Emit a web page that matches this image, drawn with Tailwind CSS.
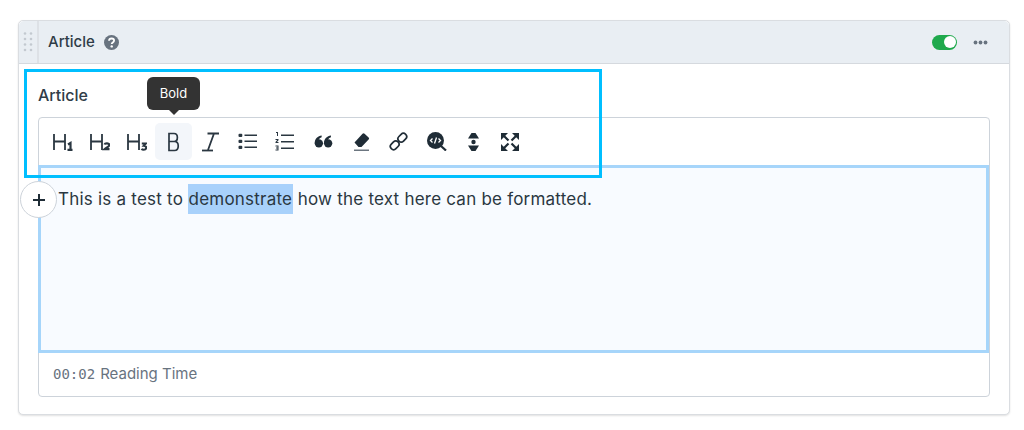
<!DOCTYPE html>
<html><head><meta charset="utf-8"><script src="https://cdn.jsdelivr.net/npm/@tailwindcss/browser@4"></script></head>
<body class="bg-white font-['Inter',sans-serif] w-[1024px] h-[430px] overflow-hidden relative">
<div class="pt-5 pl-[18px] w-[1010px]">
 <div class="w-[992px] h-[395px] rounded-[5px] border border-[#dadde1] shadow-[0_1px_2px_rgba(0,0,0,0.12)] bg-white">
  <div class="h-[43px] bg-[#e9eef3] border-b border-[#d5d9de] rounded-t-[5px] flex items-center">
   <div class="w-[20px] h-full border-r-2 border-[#dde1e6] flex items-center justify-center">
    <svg width="10" height="22" viewBox="0 0 10 22" fill="#c3c9d0"><circle cx="2" cy="2.5" r="1.3"/><circle cx="8" cy="2.5" r="1.3"/><circle cx="2" cy="8" r="1.3"/><circle cx="8" cy="8" r="1.3"/><circle cx="2" cy="13.5" r="1.3"/><circle cx="8" cy="13.5" r="1.3"/><circle cx="2" cy="19" r="1.3"/><circle cx="8" cy="19" r="1.3"/></svg>
   </div>
   <span class="ml-[9px] text-[15px] font-medium text-[#2f3c47]">Article</span>
   <svg class="ml-[9px]" width="15" height="15" viewBox="0 0 15 15"><circle cx="7.5" cy="7.5" r="7.5" fill="#68737f"/><path d="M5 5.800c.1-1.500 1.200-2.300 2.600-2.300 1.500 0 2.500.9 2.500 2.100 0 2-2.400 1.800-2.400 3.500" fill="none" stroke="#fff" stroke-width="1.800"/><circle cx="7.700" cy="11.400" r="1.200" fill="#fff"/></svg>
   <div class="ml-auto flex items-center mr-[21px] gap-[16px]">
    <div class="w-[25px] h-[15px] rounded-full bg-[#1fa94c] relative"><div class="absolute right-[1.5px] top-[1.5px] w-[12px] h-[12px] rounded-full bg-white"></div></div>
    <svg width="15" height="5" viewBox="0 0 15 5" fill="#68737f"><circle cx="2.5" cy="2.5" r="1.9"/><circle cx="7.5" cy="2.5" r="1.9"/><circle cx="12.5" cy="2.5" r="1.9"/></svg>
   </div>
  </div>
  <div class="pt-[21px] pl-[19px]">
   <div class="text-[16px] font-medium text-[#2f3c47] leading-[20px] h-[22px]">Article</div>
   <div class="mt-[10px] h-[280px] w-[952px] rounded-[4px] border border-[#cdd3da] flex flex-col">
    <div class="h-[47px] flex items-center pl-[5px] shrink-0 text-[#2a3741]">
     <button class="w-[37px] h-[37px] flex items-center justify-center"><svg width="20" height="18" viewBox="0 0 20 18" fill="none" stroke="#2a3741" stroke-width="1.8"><path d="M1 1v16M12 1v16M1 8.500h11"/><path d="M15 11.500l2.500-1.500v7M14.500 16.800h5" stroke-width="2.200"/></svg></button>
     <button class="w-[37px] h-[37px] flex items-center justify-center"><svg width="20" height="18" viewBox="0 0 20 18" fill="none" stroke="#2a3741" stroke-width="1.8"><path d="M1 1v16M12 1v16M1 8.500h11"/><path d="M14.500 11.500c.5-1.700 4.800-1.700 4.800.5 0 1.700-3.300 2.700-4.800 4.200h5" stroke-width="2.200"/></svg></button>
     <button class="w-[37px] h-[37px] flex items-center justify-center"><svg width="20" height="18" viewBox="0 0 20 18" fill="none" stroke="#2a3741" stroke-width="1.8"><path d="M1 1v16M12 1v16M1 8.500h11"/><path d="M14.800 10.500h4l-2 2.300c3.500 0 3 3.900 0 3.900-1 0-1.800-.3-2.200-1" stroke-width="2.100"/></svg></button>
     <button class="w-[37px] h-[37px] rounded-[5px] bg-[#f3f6fa] flex items-center justify-center"><svg width="12" height="20" viewBox="0 0 12 20" fill="none" stroke="#2a3741" stroke-width="1.700"><path d="M1 1.500h5c4.500 0 4.500 8 0 8H1zM1 9.500h5.500c5 0 5 9 0 9H1z"/></svg></button>
     <button class="w-[37px] h-[37px] flex items-center justify-center"><svg width="17" height="20" viewBox="0 0 17 20" fill="none" stroke="#2a3741" stroke-width="1.800"><path d="M5.500 1.500h11.500M12 1.500L6 18"/><path d="M0 18.500h11"/></svg></button>
     <button class="w-[37px] h-[37px] flex items-center justify-center"><svg width="19" height="17" viewBox="0 0 19 17" fill="#2a3741"><rect x="0.500" y="0.800" width="3.800" height="3.200" rx="1"/><rect x="0.500" y="6.800" width="3.800" height="3.200" rx="1"/><rect x="0.500" y="12.800" width="3.800" height="3.200" rx="1"/><path d="M6.500 1.500H19v1.500H6.500zM6.500 7.500H19v1.500H6.500zM6.500 13.500H19v1.500H6.500z"/></svg></button>
     <button class="w-[37px] h-[37px] flex items-center justify-center"><svg width="19" height="19" viewBox="0 0 19 19" fill="#2a3741"><path d="M1 0h2v4H2V1H1zM.5 7h3v1.200L2 10h1.500v1H.5v-1l1.700-2H.5zM.5 13.500h3v5h-3v-1h2v-1H1v-1h1.500v-1h-2z"/><path d="M6 2.500h13V4H6zM6 9h13v1.500H6zM6 15.500h13V17H6z"/></svg></button>
     <button class="w-[37px] h-[37px] flex items-center justify-center"><svg class="ml-[4px]" width="19" height="13" viewBox="0 0 20 14" fill="#1f2c36"><circle cx="5" cy="9" r="4.500"/><path d="M.6 8.500C.6 4 4 1 8 .5v2C5.500 3.500 4 5.500 4 8z"/><circle cx="15" cy="9" r="4.500"/><path d="M10.600 8.500C10.600 4 14 1 18 .5v2c-2.500 1-4 3-4 5.500z"/></svg></button>
     <button class="w-[37px] h-[37px] flex items-center justify-center"><svg class="ml-[5px]" width="17" height="18" viewBox="0 0 17 18"><path d="M1.500 9.500L9.500.8a1.500 1.500 0 0 1 2.100 0l4 3.700a1.500 1.500 0 0 1 0 2.100L8.500 14H5.500z" fill="#1f2c36"/><path d="M1 16.500h15V18H1z" fill="#6c7680"/></svg></button>
     <button class="w-[37px] h-[37px] flex items-center justify-center"><svg class="ml-[6px]" width="19" height="19" viewBox="0 0 20 20" fill="none" stroke="#1f2c36" stroke-width="1.800"><rect x="-5" y="-3.400" width="10" height="6.800" rx="3.400" transform="translate(6 14) rotate(-45)"/><rect x="-5" y="-3.400" width="10" height="6.800" rx="3.400" transform="translate(14 6) rotate(-45)"/></svg></button>
     <button class="w-[37px] h-[37px] flex items-center justify-center"><svg class="ml-[8px]" width="20" height="19" viewBox="0 0 20 19"><circle cx="8.500" cy="8.500" r="8.500" fill="#1f2c36"/><path d="M14 14l5 4.500" stroke="#1f2c36" stroke-width="2.200"/><path d="M5.500 6.500L3.500 8.500l2 2M11.500 6.500l2 2-2 2M9.500 5.500l-2 6" stroke="#fff" stroke-width="1.300" fill="none"/></svg></button>
     <button class="w-[37px] h-[37px] flex items-center justify-center"><svg class="ml-[8px]" width="11" height="18" viewBox="0 0 11 18" fill="#1f2c36"><path d="M3.500 0h4L11 5.500H0zM0 12.500h11L7.500 18h-4z"/><circle cx="5.500" cy="9" r="2.200"/></svg></button>
     <button class="w-[37px] h-[37px] flex items-center justify-center"><svg class="ml-[6px]" width="18" height="18" viewBox="0 0 18 18" fill="#1f2c36" stroke="#1f2c36"><path d="M0 0h7L0 7zM18 0v7l-7-7zM0 18v-7l7 7zM18 18h-7l7-7z" stroke="none"/><path d="M3 3l4.500 4.500M15 3l-4.500 4.500M3 15l4.500-4.500M15 15l-4.500-4.500" stroke-width="2.200"/></svg></button>
    </div>
    <div class="h-[188px] -ml-px shrink-0 border-[3px] border-[#a6d5fa] bg-[#f8fbff] pl-[17px] pt-[19px] text-[17px] leading-[24px] tracking-[0.22px] text-[#2a3741]">This is a test to <span class="bg-[#a8d1fb] py-[5px] px-[0.5px]">demonstrate</span> how the text here can be formatted.</div>
    <div class="h-[43px] flex items-center pl-[14px] pb-[1px] text-[15px] text-[#68737f]"><span class="font-['DejaVu_Sans_Mono',monospace] text-[14px] mr-[5px]">00:02</span> Reading Time</div>
   </div>
  </div>
 </div>
</div>
<div class="absolute left-[24px] top-[69px] w-[578px] h-[109px] border-[3px] border-[#00bfff] pointer-events-none"></div>
<div class="absolute left-[147px] top-[77px] w-[53px] h-[33px] rounded-[6px] bg-[#333333] text-white text-[13px] flex items-center justify-center">Bold<div class="absolute bottom-[-5px] left-[21px] w-0 h-0 border-x-[6px] border-x-transparent border-t-[6px] border-t-[#333333]"></div></div>
<div class="absolute left-[20px] top-[181px] w-[37px] h-[37px] rounded-full bg-white border border-[#cdd3da] flex items-center justify-center"><svg width="14" height="14" viewBox="0 0 14 14" stroke="#1f2c36" stroke-width="2"><path d="M7 1v12M1 7h12"/></svg></div>
</body></html>
